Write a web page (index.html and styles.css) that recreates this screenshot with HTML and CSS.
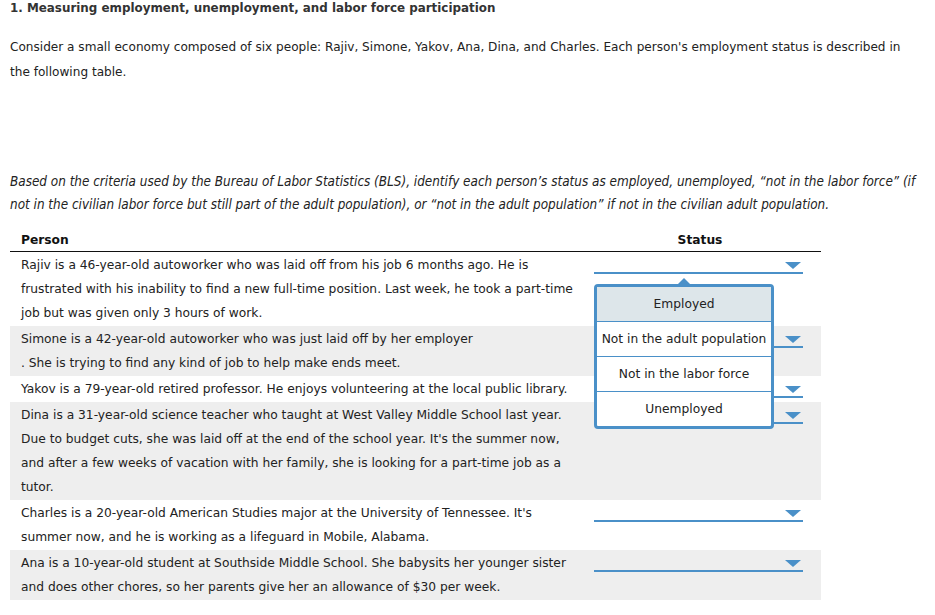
FILE: index.html
```html
<!DOCTYPE html>
<html>
<head>
<meta charset="utf-8">
<link rel="stylesheet" href="styles.css">
</head>
<body>
<h1 class="title">1. Measuring employment, unemployment, and labor force participation</h1>
<p class="intro">Consider a small economy composed of six people: Rajiv, Simone, Yakov, Ana, Dina, and Charles. Each person's employment status is described in<br>the following table.</p>
<p class="instr">Based on the criteria used by the Bureau of Labor Statistics (BLS), identify each person’s status as employed, unemployed, “not in the labor force” (if<br>not in the civilian labor force but still part of the adult population), or “not in the adult population” if not in the civilian adult population.</p>
<table class="grid">
  <colgroup><col class="c-person"><col class="c-status"></colgroup>
  <thead>
    <tr><th class="person">Person</th><th class="status">Status</th></tr>
  </thead>
  <tbody>
    <tr>
      <td class="person">Rajiv is a 46-year-old autoworker who was laid off from his job 6 months ago. He is<br>frustrated with his inability to find a new full-time position. Last week, he took a part-time<br>job but was given only 3 hours of work.</td>
      <td class="status"><div class="select-wrap"><div class="select"><svg class="arrow" width="16" height="7" viewBox="0 0 16 7"><polygon points="0,0 16,0 8,7"/></svg></div>
        <div class="menu">
          <div class="item active">Employed</div>
          <div class="item">Not in the adult population</div>
          <div class="item">Not in the labor force</div>
          <div class="item">Unemployed</div>
        </div></div></td>
    </tr>
    <tr class="alt">
      <td class="person">Simone is a 42-year-old autoworker who was just laid off by her employer<br>. She is trying to find any kind of job to help make ends meet.</td>
      <td class="status"><div class="select"><svg class="arrow" width="16" height="7" viewBox="0 0 16 7"><polygon points="0,0 16,0 8,7"/></svg></div></td>
    </tr>
    <tr>
      <td class="person">Yakov is a 79-year-old retired professor. He enjoys volunteering at the local public library.</td>
      <td class="status"><div class="select"><svg class="arrow" width="16" height="7" viewBox="0 0 16 7"><polygon points="0,0 16,0 8,7"/></svg></div></td>
    </tr>
    <tr class="alt">
      <td class="person">Dina is a 31-year-old science teacher who taught at West Valley Middle School last year.<br>Due to budget cuts, she was laid off at the end of the school year. It's the summer now,<br>and after a few weeks of vacation with her family, she is looking for a part-time job as a<br>tutor.</td>
      <td class="status"><div class="select"><svg class="arrow" width="16" height="7" viewBox="0 0 16 7"><polygon points="0,0 16,0 8,7"/></svg></div></td>
    </tr>
    <tr>
      <td class="person">Charles is a 20-year-old American Studies major at the University of Tennessee. It's<br>summer now, and he is working as a lifeguard in Mobile, Alabama.</td>
      <td class="status"><div class="select"><svg class="arrow" width="16" height="7" viewBox="0 0 16 7"><polygon points="0,0 16,0 8,7"/></svg></div></td>
    </tr>
    <tr class="alt">
      <td class="person">Ana is a 10-year-old student at Southside Middle School. She babysits her younger sister<br>and does other chores, so her parents give her an allowance of $30 per week.</td>
      <td class="status"><div class="select"><svg class="arrow" width="16" height="7" viewBox="0 0 16 7"><polygon points="0,0 16,0 8,7"/></svg></div></td>
    </tr>
  </tbody>
</table>
</body>
</html>
```
FILE: styles.css
```css
html, body {
  margin: 0;
  padding: 0;
  background: #fff;
}
body {
  padding: 0 10px;
  font-family: "DejaVu Sans", Verdana, sans-serif;
  font-size: 12.25px;
  color: #222;
}
.title {
  margin: 0;
  font-size: 11.9px;
  font-weight: bold;
  line-height: 16px;
  color: #333;
}
.intro {
  margin: 19px 0 0 0;
  line-height: 25px;
  white-space: nowrap;
  font-size: 12.1px;
}
.instr {
  margin: 85px 0 0 0;
  font-family: "DejaVu Sans Condensed", "DejaVu Sans", sans-serif;
  font-style: italic;
  font-size: 13.4px;
  line-height: 23px;
  white-space: nowrap;
}
.grid {
  margin-top: 14px;
  width: 811px;
  border-collapse: collapse;
  table-layout: fixed;
}
.c-person {
  width: 573px;
}
.grid th {
  font-weight: bold;
  text-align: left;
  line-height: 16px;
  padding: 2px 0 3px 0;
  border-bottom: 1.5px solid #111;
  color: #111;
}
.grid th.person {
  padding-left: 11px;
}
.grid th.status {
  text-align: center;
  padding-right: 4px;
}
.grid td {
  vertical-align: top;
  padding: 1px 0;
  line-height: 24px;
}
.grid td.person {
  padding-left: 11px;
  white-space: nowrap;
}
.grid td.status {
  padding-left: 11px;
  padding-right: 18px;
}
.grid tr.alt td {
  background: #eeeeee;
}
.select-wrap {
  position: relative;
}
.select {
  height: 19px;
  border-bottom: 2px solid #4a90c8;
  display: flex;
  justify-content: flex-end;
  align-items: flex-start;
  padding-right: 2px;
}
.arrow {
  margin-top: 9px;
  fill: #4a90c8;
}
.menu {
  position: absolute;
  left: 0;
  top: 31px;
  width: 174px;
  border: 3px solid #4a90c8;
  border-radius: 4px;
  background: #fff;
  z-index: 5;
}
.menu::before {
  content: "";
  position: absolute;
  left: 81px;
  top: -9px;
  border-left: 6px solid transparent;
  border-right: 6px solid transparent;
  border-bottom: 6px solid #4a90c8;
}
.item {
  height: 34px;
  line-height: 34px;
  text-align: center;
  border-top: 1px solid #4a90c8;
  color: #222;
  white-space: nowrap;
}
.item:first-child {
  border-top: none;
}
.item.active {
  background: #dde6ea;
}
```
